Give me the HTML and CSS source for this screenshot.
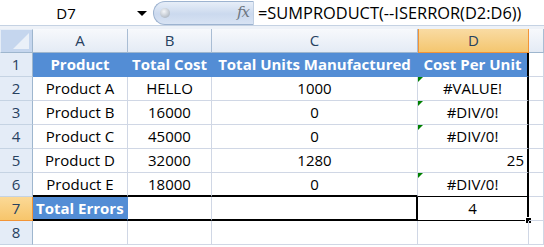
FILE: index.html
```html
<!DOCTYPE html>
<html lang="en">
<head>
    <meta charset="UTF-8">
    <title>Total Errors - SUMPRODUCT ISERROR</title>
    <link rel="stylesheet" href="styles.css">
</head>
<body>
    <div class="formula-bar">
        <div class="name-box">
            <span class="name">D7</span>
            <span class="drop"></span>
        </div>
        <div class="fx-pill">
            <span class="knob"></span>
            <span class="fx">fx</span>
        </div>
        <div class="formula">=SUMPRODUCT(--ISERROR(D2:D6))</div>
    </div>
    <div class="strip"></div>

    <div class="sheet">
        <!-- column headers -->
        <div class="corner"><span class="tri"></span></div>
        <div class="col-head">A</div>
        <div class="col-head">B</div>
        <div class="col-head">C</div>
        <div class="col-head active">D</div>
        <div class="col-head"></div>

        <!-- row 1 -->
        <div class="row-head">1</div>
        <div class="cell th">Product</div>
        <div class="cell th">Total Cost</div>
        <div class="cell th">Total Units Manufactured</div>
        <div class="cell th edge">Cost Per Unit</div>
        <div class="cell"></div>

        <!-- row 2 -->
        <div class="row-head">2</div>
        <div class="cell">Product A</div>
        <div class="cell">HELLO</div>
        <div class="cell">1000</div>
        <div class="cell edge err">#VALUE!</div>
        <div class="cell"></div>

        <div class="row-head">3</div>
        <div class="cell">Product B</div>
        <div class="cell">16000</div>
        <div class="cell">0</div>
        <div class="cell edge err">#DIV/0!</div>
        <div class="cell"></div>

        <div class="row-head">4</div>
        <div class="cell">Product C</div>
        <div class="cell">45000</div>
        <div class="cell">0</div>
        <div class="cell edge err">#DIV/0!</div>
        <div class="cell"></div>

        <div class="row-head">5</div>
        <div class="cell">Product D</div>
        <div class="cell">32000</div>
        <div class="cell">1280</div>
        <div class="cell edge num">25</div>
        <div class="cell"></div>

        <div class="row-head">6</div>
        <div class="cell above">Product E</div>
        <div class="cell above">18000</div>
        <div class="cell above">0</div>
        <div class="cell edge err above-thin">#DIV/0!</div>
        <div class="cell"></div>

        <!-- row 7 -->
        <div class="row-head active">7</div>
        <div class="cell total label">Total Errors</div>
        <div class="cell total"></div>
        <div class="cell total last"></div>
        <div class="cell result">4<span class="handle"></span></div>
        <div class="cell"></div>

        <div class="row-head">8</div>
        <div class="cell"></div>
        <div class="cell"></div>
        <div class="cell"></div>
        <div class="cell"></div>
        <div class="cell"></div>
    </div>
</body>
</html>
```

FILE: styles.css
```css
* {
    box-sizing: border-box;
}
body {
    margin: 0;
    width: 544px;
    height: 247px;
    overflow: hidden;
    background: #fff;
    font-family: "Open Sans", Lato, sans-serif;
    color: #000;
}

/* formula bar */
.formula-bar {
    display: flex;
    height: 26px;
    background: #fff;
    border-bottom: 1px solid #c5d2e3;
}
.name-box {
    width: 153px;
    display: flex;
    align-items: center;
}
.name {
    width: 132px;
    text-align: center;
    font-size: 15px;
}
.drop {
    width: 0;
    height: 0;
    margin-left: 5px;
    margin-top: 2px;
    border-left: 5px solid transparent;
    border-right: 5px solid transparent;
    border-top: 5px solid #000;
}
.fx-pill {
    position: relative;
    width: 101px;
    height: 24px;
    margin-top: 1px;
    border: 1px solid #9db3d0;
    border-right: 1px solid #c0cfe2;
    border-radius: 12px 0 0 12px;
    background: linear-gradient(#e7eef8, #cbd9ee 55%, #d8e3f3);
}
.knob {
    position: absolute;
    left: 6px;
    top: 6px;
    width: 10px;
    height: 10px;
    border-radius: 50%;
    background: radial-gradient(circle at 40% 35%, #f4f6f9, #9ba6b3);
}
.fx {
    position: absolute;
    right: 4px;
    top: 1px;
    font-family: "DejaVu Serif", serif;
    font-style: italic;
    font-size: 15px;
    color: #6d7680;
    letter-spacing: -1px;
}
.formula {
    padding-left: 4px;
    font-size: 16.4px;
    line-height: 25px;
    white-space: nowrap;
}
.strip {
    height: 3px;
    background: #eef2f8;
}

/* sheet grid */
.sheet {
    display: grid;
    grid-template-columns: 33px 95px 84px 206px 111px 15px;
    grid-auto-rows: 24px;
    font-size: 15px;
}
.corner {
    position: relative;
    background: #c5d6ee;
    border: 1px solid #e5edf7;
    border-right-color: #9eb6ce;
    border-bottom-color: #9eb6ce;
}
.tri {
    position: absolute;
    right: 3px;
    bottom: 3px;
    width: 0;
    height: 0;
    border-left: 16px solid transparent;
    border-bottom: 16px solid #eaf0f8;
}
.col-head {
    background: linear-gradient(#f7f9fc, #e4ebf5);
    border-right: 1px solid #a9bdd4;
    border-bottom: 1px solid #9eb6ce;
    text-align: center;
    line-height: 23px;
    color: #27415f;
}
.col-head.active {
    background: linear-gradient(#f9dba3, #f4c66f);
    border-right-color: #f29436;
    border-bottom-color: #f29436;
    border-left: 1px solid #f29436;
}
.row-head {
    background: #e4ecf7;
    border-right: 1px solid #9eb6ce;
    border-bottom: 1px solid #c5d3e3;
    text-align: center;
    line-height: 23px;
    color: #27415f;
}
.row-head.active {
    background: linear-gradient(#fbd996, #f7c56b);
    border-right-color: #f29436;
    border-bottom-color: #f29436;
}
.cell {
    position: relative;
    border-right: 1px solid #d0d7e5;
    border-bottom: 1px solid #d0d7e5;
    text-align: center;
    line-height: 23px;
    white-space: nowrap;
    padding: 0 3px;
}
.th {
    background: #538dd5;
    color: #fff;
    font-weight: bold;
    border-right-color: #538dd5;
    border-bottom-color: #538dd5;
}
.edge {
    border-right: 2px solid #000;
}
.num {
    text-align: right;
}
.err::before {
    content: "";
    position: absolute;
    left: 0;
    top: 0;
    border-top: 5px solid #008000;
    border-right: 5px solid transparent;
}
.above {
    border-bottom: 2px solid #000;
}
.above-thin {
    border-bottom: 1px solid #000;
}
.total {
    border-bottom: 2px solid #000;
}
.total.last {
    border-right: 2px solid #000;
}
.label {
    background: #538dd5;
    color: #fff;
    font-weight: bold;
    text-align: left;
    padding-left: 3px;
    border-right-color: #538dd5;
}
.result {
    border-right: 2px solid #000;
    border-bottom: 1px solid #000;
}
.handle {
    position: absolute;
    right: -5px;
    bottom: -4px;
    width: 7px;
    height: 7px;
    background: #000;
    border: 1px solid #fff;
}
```
